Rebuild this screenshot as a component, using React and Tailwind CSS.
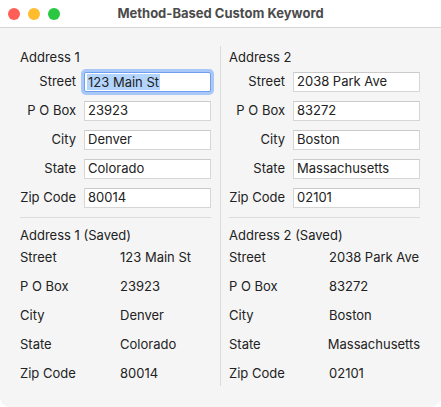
const FONT = { fontFamily: "Inter, 'Noto Sans', sans-serif" };

const addr1 = [
  ["Street", "123 Main St"],
  ["P O Box", "23923"],
  ["City", "Denver"],
  ["State", "Colorado"],
  ["Zip Code", "80014"],
];

const addr2 = [
  ["Street", "2038 Park Ave"],
  ["P O Box", "83272"],
  ["City", "Boston"],
  ["State", "Massachusetts"],
  ["Zip Code", "02101"],
];

function Field({ value, focused }) {
  if (focused) {
    return (
      <div className="h-5 w-[127px] bg-white border border-[#6f9ff0] ring-[3px] ring-[#a9c7f7] rounded-[2px] flex items-center pl-[2px]">
        <span className="bg-[#b3d4fc] leading-[16px] px-[1px]">{value}</span>
      </div>
    );
  }
  return (
    <div className="h-5 w-[127px] bg-white border border-[#d6d6d6] border-t-[#cacaca] flex items-center pl-[3px]">
      {value}
    </div>
  );
}

function Column({ title, rows, focusFirst }) {
  return (
    <div className="flex flex-col w-[191px] pt-[3px]">
      <div className="h-4 leading-4">{title}</div>
      <div className="flex flex-col gap-[9px] mt-[7px]">
        {rows.map(([label, value], i) => (
          <div key={label} className="flex items-center gap-2 h-5">
            <div className="w-14 text-right">{label}</div>
            <Field value={value} focused={focusFirst && i === 0} />
          </div>
        ))}
      </div>
      <div className="h-px bg-[#dcdcdc] mt-[9px]" />
      <div className="h-4 leading-4 mt-[9px]">{title} (Saved)</div>
      <div className="flex flex-col gap-[9px] mt-[5px]">
        {rows.map(([label, value]) => (
          <div key={label} className="flex items-center h-5">
            <div className="w-[100px]">{label}</div>
            <div>{value}</div>
          </div>
        ))}
      </div>
    </div>
  );
}

export default function App() {
  return (
    <div className="w-[441px] h-[407px] bg-white" style={FONT}>
      <div className="w-full h-full bg-[#f5f5f5] rounded-b-[10px] overflow-hidden flex flex-col text-[13px] text-[#222222]">
        {/* title bar */}
        <div className="h-7 shrink-0 bg-white border-b border-[#d4d4d4] relative flex items-center justify-center">
          <div className="absolute left-2 top-2 flex gap-2">
            <span className="w-3 h-3 rounded-full bg-[#ff5f57]" />
            <span className="w-3 h-3 rounded-full bg-[#febc2e]" />
            <span className="w-3 h-3 rounded-full bg-[#28c840]" />
          </div>
          <div className="font-bold text-[13px] text-[#4b4b4b]">Method-Based Custom Keyword</div>
        </div>

        {/* content */}
        <div className="flex pt-[18px]">
          <div className="pl-5 pr-[9px]">
            <Column title="Address 1" rows={addr1} focusFirst />
          </div>
          <div className="w-px h-[340px] bg-[#dcdcdc]" />
          <div className="pl-[8px]">
            <Column title="Address 2" rows={addr2} />
          </div>
        </div>
      </div>
    </div>
  );
}
